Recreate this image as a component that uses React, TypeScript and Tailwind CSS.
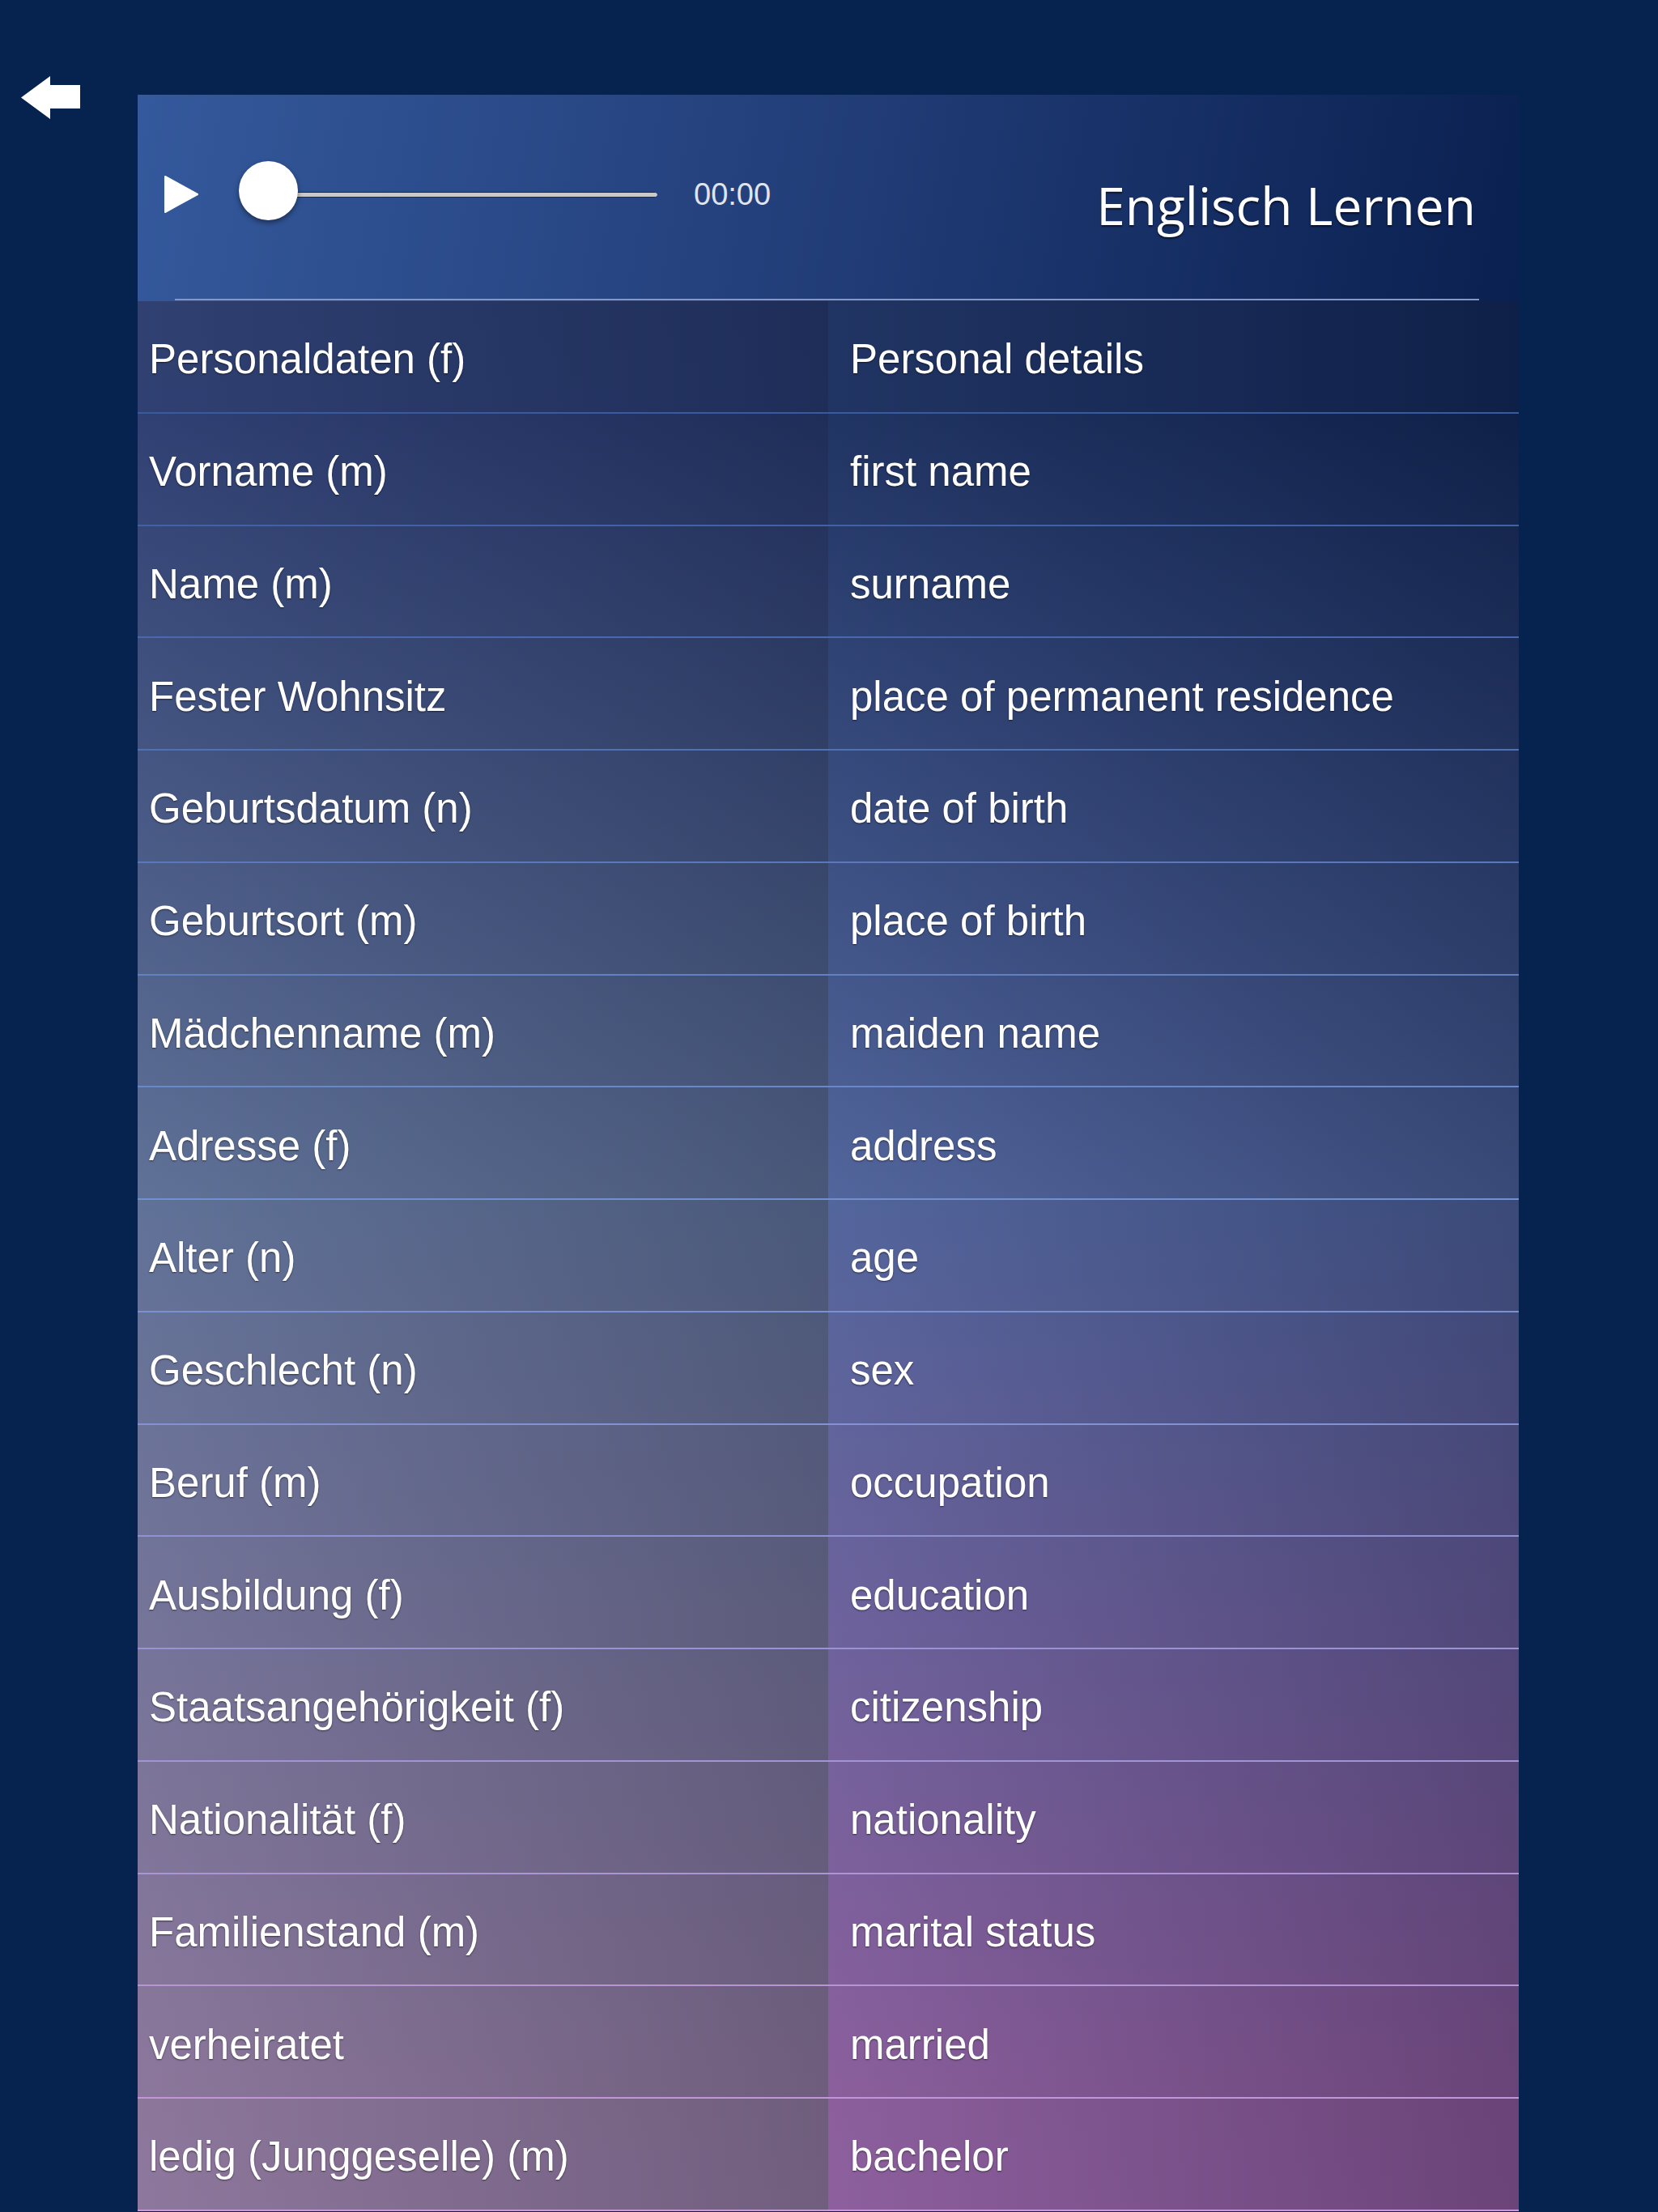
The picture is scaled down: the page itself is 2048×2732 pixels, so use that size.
const rows = [
  { de: "Personaldaten (f)", en: "Personal details", line: "border-[#3a5aa0]" },
  { de: "Vorname (m)", en: "first name", line: "border-[#4262a7]" },
  { de: "Name (m)", en: "surname", line: "border-[#4969ae]" },
  { de: "Fester Wohnsitz", en: "place of permanent residence", line: "border-[#5171b5]" },
  { de: "Geburtsdatum (n)", en: "date of birth", line: "border-[#5979bb]" },
  { de: "Geburtsort (m)", en: "place of birth", line: "border-[#6181c2]" },
  { de: "Mädchenname (m)", en: "maiden name", line: "border-[#6888c9]" },
  { de: "Adresse (f)", en: "address", line: "border-[#7090d0]" },
  { de: "Alter (n)", en: "age", line: "border-[#7a91d1]" },
  { de: "Geschlecht (n)", en: "sex", line: "border-[#8491d2]" },
  { de: "Beruf (m)", en: "occupation", line: "border-[#8e92d3]" },
  { de: "Ausbildung (f)", en: "education", line: "border-[#9893d4]" },
  { de: "Staatsangehörigkeit (f)", en: "citizenship", line: "border-[#a294d5]" },
  { de: "Nationalität (f)", en: "nationality", line: "border-[#ac94d6]" },
  { de: "Familienstand (m)", en: "marital status", line: "border-[#b695d7]" },
  { de: "verheiratet", en: "married", line: "border-[#c096d8]" },
  { de: "ledig (Junggeselle) (m)", en: "bachelor", line: "border-[#c898dc]" },
];

function BackArrow() {
  return (
    <svg width="73" height="53" viewBox="0 0 73 53" aria-hidden>
      <path d="M0 26.5 L36 0 L36 11 L73 11 L73 40 L36 40 L36 53 Z" fill="#ffffff" />
    </svg>
  );
}

function PlayerHeader() {
  return (
    <div className="h-[255px] bg-[linear-gradient(100deg,#34599c_0%,#24407c_45%,#0a2050_100%)]">
      <div className="flex h-[246px] items-center pl-[32px] pr-[53px]">
        <svg width="43" height="46" viewBox="0 0 43 46" aria-hidden>
          <path d="M2 1 L42 23 L2 45 Z" fill="#ffffff" strokeLinejoin="round" stroke="#ffffff" strokeWidth="2" />
        </svg>
        <div className="relative ml-[50px] h-[73px] w-[518px]">
          <div className="absolute left-[36px] right-0 top-[33px] h-[7px] rounded-sm border border-[#0b2a6e] bg-[#c9c9c9]" />
          <div className="absolute left-0 top-[-5px] h-[73px] w-[73px] rounded-full bg-white shadow-[0_3px_6px_rgba(0,0,0,0.45)]" />
        </div>
        <span className="ml-[44px] font-['Liberation_Sans',Arial,sans-serif] text-[38px] leading-none text-[#dfe4ef]">
          00:00
        </span>
        <h1 className="ml-auto translate-y-[14px] font-['Open_Sans',sans-serif] text-[64px] font-medium leading-none text-white [text-shadow:0_2px_2px_rgba(0,0,0,0.6)]">
          Englisch Lernen
        </h1>
      </div>
      <div className="mx-[46px] mr-[49px] mt-[6px] h-[2px] bg-[#8797c4]" />
    </div>
  );
}

export default function App() {
  return (
    <div className="flex min-h-[2732px] w-full overflow-hidden bg-[#062350] font-['Liberation_Sans',Arial,sans-serif]">
      <div className="w-[170px] shrink-0 pl-[26px] pt-[94px]">
        <BackArrow />
      </div>
      <div className="mt-[117px] w-[1706px] shrink-0">
        <PlayerHeader />
        <div className="[background:linear-gradient(to_right,rgba(255,255,255,0.05),rgba(0,0,0,0.17)_50%,rgba(255,255,255,0.06)_50%,rgba(0,0,0,0.2)),linear-gradient(to_bottom,#24366a_0%,#25366b_6%,#586a92_47%,#867096_94%,#887098_100%)_left/50%_100%_no-repeat,linear-gradient(to_bottom,#13285a_0%,#13285a_6%,#485c96_47%,#845596_94%,#865598_100%)_right/50%_100%_no-repeat]">
          {rows.map((r) => (
            <div
              key={r.de}
              className={`grid h-[138.75px] grid-cols-2 border-b-2 text-[51px] leading-none text-white [text-shadow:0_1px_2px_rgba(0,0,0,0.55)] ${r.line}`}
            >
              <div className="flex items-center pl-[14px] pt-[7px]">{r.de}</div>
              <div className="flex items-center pl-[27px] pt-[7px]">{r.en}</div>
            </div>
          ))}
        </div>
      </div>
    </div>
  );
}
